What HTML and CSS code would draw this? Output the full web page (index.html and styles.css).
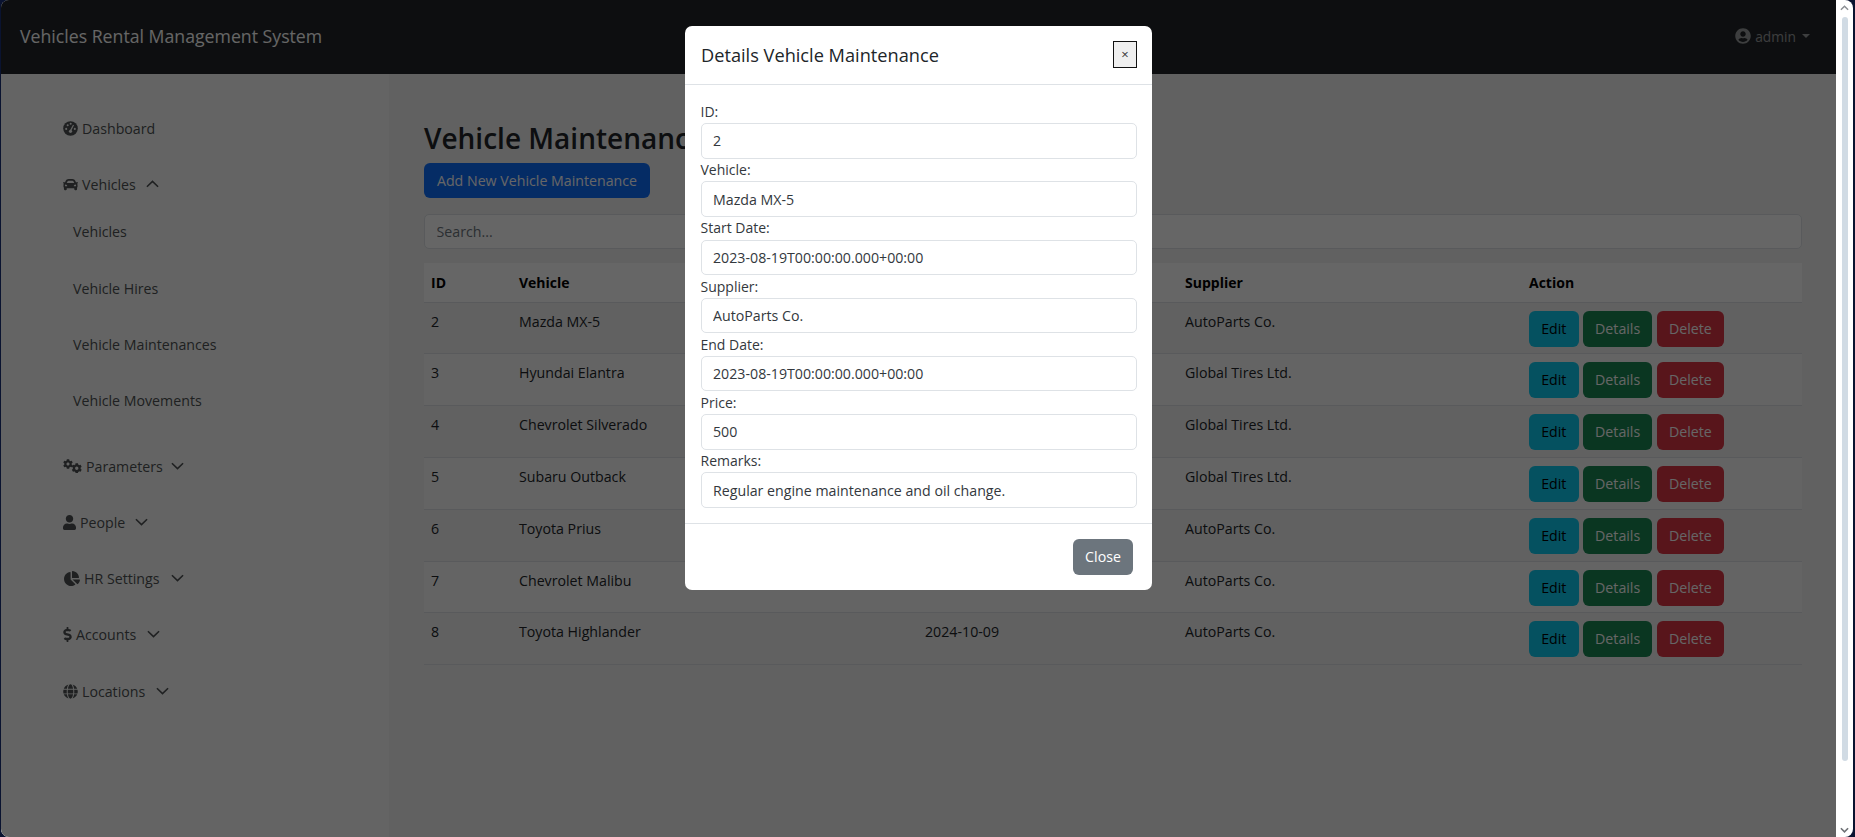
FILE: index.html
```html
<!DOCTYPE html>
<html lang="en">
<head>
<meta charset="utf-8">
<title>Vehicles Rental Management System</title>
<link rel="stylesheet" href="styles.css">
</head>
<body>
<svg class="defs" width="0" height="0" aria-hidden="true">
  <symbol id="i-chev-up" viewBox="0 0 14 8"><polyline points="1,7 7,1.2 13,7" fill="none" stroke="currentColor" stroke-width="1.7"/></symbol>
  <symbol id="i-chev-down" viewBox="0 0 14 8"><polyline points="1,1 7,6.8 13,1" fill="none" stroke="currentColor" stroke-width="1.7"/></symbol>
  <symbol id="i-cog" viewBox="0 0 512 512"><path fill="currentColor" d="M487.4 315.7l-42.6-24.6c4.3-23.2 4.3-47 0-70.2l42.6-24.6c4.9-2.8 7.1-8.6 5.5-14-11.1-35.6-30-67.8-54.7-94.6-3.8-4.1-10-5.1-14.8-2.3L380.8 110c-17.9-15.4-38.5-27.3-60.8-35.1V25.8c0-5.6-3.9-10.5-9.4-11.7-36.7-8.2-74.3-7.8-109.2 0-5.5 1.2-9.4 6.1-9.4 11.7V75c-22.2 7.9-42.8 19.8-60.8 35.1L88.7 85.5c-4.9-2.8-11-1.9-14.8 2.3-24.7 26.7-43.6 58.9-54.7 94.6-1.7 5.4.6 11.2 5.5 14L67.3 221c-4.3 23.2-4.3 47 0 70.2l-42.6 24.6c-4.9 2.8-7.1 8.6-5.5 14 11.1 35.6 30 67.8 54.7 94.6 3.8 4.1 10 5.1 14.8 2.3l42.6-24.6c17.9 15.4 38.5 27.3 60.8 35.1v49.2c0 5.6 3.9 10.5 9.4 11.7 36.7 8.2 74.3 7.8 109.2 0 5.5-1.2 9.4-6.1 9.4-11.7v-49.2c22.2-7.9 42.8-19.8 60.8-35.1l42.6 24.6c4.9 2.8 11 1.9 14.8-2.3 24.7-26.7 43.6-58.9 54.7-94.6 1.5-5.5-.7-11.3-5.6-14.1zM256 336c-44.1 0-80-35.9-80-80s35.9-80 80-80 80 35.9 80 80-35.9 80-80 80z"/></symbol>
</svg>

<div class="window">
  <div class="page">
    <header class="navbar">
      <a class="brand">Vehicles Rental Management System</a>
      <a class="user">
        <svg class="user-icon" viewBox="0 0 496 512"><path fill="currentColor" d="M248 8C111 8 0 119 0 256s111 248 248 248 248-111 248-248S385 8 248 8zm0 96c48.6 0 88 39.4 88 88s-39.4 88-88 88-88-39.4-88-88 39.4-88 88-88zm0 344c-58.7 0-111.3-26.6-146.5-68.2 18.8-35.4 55.6-59.8 98.5-59.8 2.4 0 4.8.4 7.1 1.1 13 4.2 26.6 6.9 40.9 6.9 14.3 0 28-2.7 40.9-6.9 2.3-.7 4.7-1.1 7.1-1.1 42.9 0 79.7 24.4 98.5 59.8C359.3 421.4 306.7 448 248 448z"/></svg>
        <span>admin</span>
        <i class="caret"></i>
      </a>
    </header>

    <div class="body-row">
      <nav class="sidebar">
        <a class="nav-link">
          <svg class="ico" viewBox="0 0 16 16"><circle cx="8" cy="8" r="7.8" fill="currentColor"/><g class="ico-holes"><circle cx="3.4" cy="8.4" r="1.1"/><circle cx="5" cy="4.6" r="1.1"/><circle cx="8.2" cy="3" r="1.1"/><circle cx="12.6" cy="8.4" r="1.1"/><path d="M8.2 10 L11.2 4.2"/><circle cx="8" cy="11" r="1.7"/></g></svg>
          <span>Dashboard</span>
        </a>
        <a class="nav-link">
          <svg class="ico" viewBox="0 0 512 512"><path fill="currentColor" d="M499.99 176h-59.87l-16.64-41.6C406.38 91.63 365.57 64 319.5 64h-127c-46.06 0-86.88 27.63-103.99 70.4L71.87 176H12.01C4.2 176-1.53 183.34.37 190.91l6 24C7.7 220.25 12.5 224 18.01 224h20.07C24.65 235.73 16 252.78 16 272v48c0 16.12 6.16 30.67 16 41.93V416c0 17.67 14.33 32 32 32h32c17.67 0 32-14.33 32-32v-32h256v32c0 17.67 14.33 32 32 32h32c17.67 0 32-14.33 32-32v-54.07c9.84-11.25 16-25.8 16-41.93v-48c0-19.22-8.65-36.27-22.07-48H494c5.51 0 10.31-3.75 11.64-9.09l6-24c1.89-7.57-3.84-14.91-11.65-14.91zm-352.06-17.83c7.29-18.22 24.94-30.17 44.57-30.17h127c19.63 0 37.28 11.95 44.57 30.17L384 208H128l19.93-49.83zM96 319.8c-19.2 0-32-12.76-32-31.9S76.8 256 96 256s48 28.71 48 47.85-28.8 15.95-48 15.95zm320 0c-19.2 0-48 3.19-48-15.95S396.8 256 416 256s32 12.76 32 31.9-12.8 31.9-32 31.9z"/></svg>
          <span>Vehicles</span>
          <svg class="chev"><use href="#i-chev-up"/></svg>
        </a>
        <div class="subnav">
          <a class="sub-link sub-first">Vehicles</a>
          <a class="sub-link">Vehicle Hires</a>
          <a class="sub-link">Vehicle Maintenances</a>
          <a class="sub-link">Vehicle Movements</a>
        </div>
        <a class="nav-link">
          <svg class="ico ico-gears" viewBox="0 0 19 14"><use href="#i-cog" x="0" y="0" width="10" height="10"/><use href="#i-cog" x="8.5" y="4" width="10.5" height="10.5"/></svg>
          <span>Parameters</span>
          <svg class="chev chev-tight"><use href="#i-chev-down"/></svg>
        </a>
        <a class="nav-link">
          <svg class="ico ico-user" viewBox="0 0 448 512"><path fill="currentColor" d="M224 256c70.7 0 128-57.3 128-128S294.7 0 224 0 96 57.3 96 128s57.3 128 128 128zm89.6 32h-16.7c-22.2 10.2-46.9 16-72.9 16s-50.6-5.8-72.9-16h-16.7C60.2 288 0 348.2 0 422.4V464c0 26.5 21.5 48 48 48h352c26.5 0 48-21.5 48-48v-41.6c0-74.2-60.2-134.4-134.4-134.4z"/></svg>
          <span>People</span>
          <svg class="chev"><use href="#i-chev-down"/></svg>
        </a>
        <a class="nav-link">
          <svg class="ico ico-pie" viewBox="0 0 544 512"><path fill="currentColor" d="M527.79 288H290.5l158.03 158.03c6.04 6.04 15.98 6.53 22.19.68 38.7-36.46 65.32-85.61 73.13-140.86 1.34-9.46-6.51-17.85-16.06-17.85zm-15.83-64.8C503.72 103.74 408.26 8.28 288.8.04 279.68-.59 272 7.1 272 16.24V240h223.77c9.14 0 16.82-7.68 16.19-16.8zM224 288V50.71c0-9.55-8.39-17.4-17.84-16.06C86.99 51.49-4.1 155.6.14 280.37 4.5 408.51 114.83 513.59 243.03 511.98c50.4-.63 96.97-16.87 135.26-44.03 7.9-5.6 8.42-17.23 1.57-24.08L224 288z"/></svg>
          <span>HR Settings</span>
          <svg class="chev chev-wide"><use href="#i-chev-down"/></svg>
        </a>
        <a class="nav-link">
          <svg class="ico ico-dollar" viewBox="0 0 288 512"><path fill="currentColor" d="M209.2 233.4l-108-31.6C88.7 198.2 80 186.5 80 173.5c0-16.3 13.2-29.5 29.5-29.5h66.3c12.2 0 24.2 3.7 34.2 10.5 6.1 4.1 14.3 3.1 19.5-2l34.8-34c7.1-6.9 6.1-18.4-1.8-24.5C238 74.8 207.4 64.1 176 64V16c0-8.8-7.2-16-16-16h-32c-8.8 0-16 7.2-16 16v48h-2.5C45.8 64-5.4 118.7.5 183.6c4.2 46.1 39.4 83.6 83.8 96.6l102.5 30c12.5 3.7 21.2 15.3 21.2 28.3 0 16.3-13.2 29.5-29.5 29.5h-66.3C100 368 88 364.3 78 357.5c-6.1-4.1-14.3-3.1-19.5 2l-34.8 34c-7.1 6.9-6.1 18.4 1.8 24.5 24.5 19.2 55.1 29.9 86.5 30v48c0 8.8 7.2 16 16 16h32c8.8 0 16-7.2 16-16v-48.2c46.6-.9 90.3-28.6 105.7-72.7 21.5-61.6-14.6-124.8-72.5-141.7z"/></svg>
          <span>Accounts</span>
          <svg class="chev chev-wide"><use href="#i-chev-down"/></svg>
        </a>
        <a class="nav-link">
          <svg class="ico" viewBox="0 0 496 512"><path fill="currentColor" d="M336.5 160C322 70.7 287.8 8 248 8s-74 62.7-88.5 152h177zM152 256c0 22.2 1.2 43.5 3.3 64h185.3c2.1-20.5 3.3-41.8 3.3-64s-1.2-43.5-3.3-64H155.3c-2.1 20.5-3.3 41.8-3.3 64zm324.7-96c-28.6-67.9-86.5-120.4-158-141.6 24.4 33.8 41.2 84.7 50 141.6h108zM177.2 18.4C105.8 39.6 47.8 92.1 19.3 160h108c8.7-56.9 25.5-107.8 49.9-141.6zM487.4 192H372.7c2.1 21 3.3 42.5 3.3 64s-1.2 43-3.3 64h114.6c5.5-20.5 8.6-41.8 8.6-64s-3.1-43.5-8.5-64zM120 256c0-21.5 1.2-43 3.3-64H8.6C3.2 212.5 0 233.8 0 256s3.2 43.5 8.6 64h114.6c-2-21-3.2-42.5-3.2-64zm39.5 96c14.5 89.3 48.7 152 88.5 152s74-62.7 88.5-152h-177zm159.3 141.6c71.4-21.2 129.4-73.7 158-141.6h-108c-8.8 56.9-25.6 107.8-50 141.6zM19.3 352c28.6 67.9 86.5 120.4 158 141.6-24.4-33.8-41.2-84.7-50-141.6h-108z"/></svg>
          <span>Locations</span>
          <svg class="chev chev-wide"><use href="#i-chev-down"/></svg>
        </a>
      </nav>

      <main class="content">
        <h2 class="page-title">Vehicle Maintenances</h2>
        <button class="btn btn-primary btn-add">Add New Vehicle Maintenance</button>
        <input class="search" type="text" placeholder="Search...">
        <table class="table">
          <colgroup>
            <col class="col-id"><col class="col-vehicle"><col class="col-date"><col class="col-supplier"><col class="col-action">
          </colgroup>
          <thead>
            <tr><th>ID</th><th>Vehicle</th><th>Start Date</th><th>Supplier</th><th>Action</th></tr>
          </thead>
          <tbody>
            <tr><td>2</td><td>Mazda MX-5</td><td></td><td>AutoParts Co.</td><td><div class="actions"><button class="btn btn-info">Edit</button><button class="btn btn-success">Details</button><button class="btn btn-danger">Delete</button></div></td></tr>
            <tr><td>3</td><td>Hyundai Elantra</td><td></td><td>Global Tires Ltd.</td><td><div class="actions"><button class="btn btn-info">Edit</button><button class="btn btn-success">Details</button><button class="btn btn-danger">Delete</button></div></td></tr>
            <tr><td>4</td><td>Chevrolet Silverado</td><td></td><td>Global Tires Ltd.</td><td><div class="actions"><button class="btn btn-info">Edit</button><button class="btn btn-success">Details</button><button class="btn btn-danger">Delete</button></div></td></tr>
            <tr><td>5</td><td>Subaru Outback</td><td></td><td>Global Tires Ltd.</td><td><div class="actions"><button class="btn btn-info">Edit</button><button class="btn btn-success">Details</button><button class="btn btn-danger">Delete</button></div></td></tr>
            <tr><td>6</td><td>Toyota Prius</td><td></td><td>AutoParts Co.</td><td><div class="actions"><button class="btn btn-info">Edit</button><button class="btn btn-success">Details</button><button class="btn btn-danger">Delete</button></div></td></tr>
            <tr><td>7</td><td>Chevrolet Malibu</td><td></td><td>AutoParts Co.</td><td><div class="actions"><button class="btn btn-info">Edit</button><button class="btn btn-success">Details</button><button class="btn btn-danger">Delete</button></div></td></tr>
            <tr><td>8</td><td>Toyota Highlander</td><td>2024-10-09</td><td>AutoParts Co.</td><td><div class="actions"><button class="btn btn-info">Edit</button><button class="btn btn-success">Details</button><button class="btn btn-danger">Delete</button></div></td></tr>
          </tbody>
        </table>
      </main>
    </div>

    <div class="backdrop"></div>
    <div class="modal-layer">
      <section class="modal">
        <div class="modal-header">
          <h5 class="modal-title">Details Vehicle Maintenance</h5>
          <button class="btn-close">×</button>
        </div>
        <div class="modal-body">
          <div class="field"><label class="field-label">ID:</label><input class="field-input" type="text" value="2"></div>
          <div class="field"><label class="field-label">Vehicle:</label><input class="field-input" type="text" value="Mazda MX-5"></div>
          <div class="field"><label class="field-label">Start Date:</label><input class="field-input" type="text" value="2023-08-19T00:00:00.000+00:00"></div>
          <div class="field"><label class="field-label">Supplier:</label><input class="field-input" type="text" value="AutoParts Co."></div>
          <div class="field"><label class="field-label">End Date:</label><input class="field-input" type="text" value="2023-08-19T00:00:00.000+00:00"></div>
          <div class="field"><label class="field-label">Price:</label><input class="field-input" type="text" value="500"></div>
          <div class="field"><label class="field-label">Remarks:</label><input class="field-input" type="text" value="Regular engine maintenance and oil change."></div>
        </div>
        <div class="modal-footer">
          <button class="btn btn-secondary">Close</button>
        </div>
      </section>
    </div>
  </div>

  <div class="scrollbar">
    <svg class="sb-arrow" viewBox="0 0 10 6"><polyline points="1,5 5,1 9,5" fill="none" stroke="#8b8f94" stroke-width="1.6"/></svg>
    <div class="sb-thumb"></div>
    <svg class="sb-arrow" viewBox="0 0 10 6"><polyline points="1,1 5,5 9,1" fill="none" stroke="#6f7276" stroke-width="1.8"/></svg>
  </div>
</div>
</body>
</html>
```

FILE: styles.css
```css
* { box-sizing: border-box; }

html, body {
  margin: 0;
  height: 100%;
  overflow: hidden;
  background: #0a1330;
}

body {
  font-family: "Open Sans", "Noto Sans", sans-serif;
  font-size: 14.2px;
  line-height: 21px;
  color: #212529;
}

.defs { position: absolute; }

.window {
  display: flex;
  height: 837px;
  margin: 0 2px 0 1px;
  border-radius: 8px;
  overflow: hidden;
}

.page {
  position: relative;
  flex: 1;
  display: flex;
  flex-direction: column;
  min-width: 0;
  background: #f2f2f2;
}

/* navbar */
.navbar {
  height: 74px;
  flex: none;
  display: flex;
  align-items: center;
  justify-content: space-between;
  padding: 0 26px 2px 19px;
  background: #212529;
}

.brand {
  font-size: 17.7px;
  color: #fff;
}

.user {
  display: flex;
  align-items: center;
  gap: 4px;
  font-size: 13.8px;
  color: rgba(255, 255, 255, .55);
}

.user-icon { width: 16px; height: 16px; }

.caret {
  margin-left: 2px;
  border-top: 4px solid currentColor;
  border-left: 4px solid transparent;
  border-right: 4px solid transparent;
}

/* sidebar */
.body-row {
  flex: 1;
  display: flex;
  min-height: 0;
}

.sidebar {
  width: 388px;
  flex: none;
  padding: 26px 0 0 62px;
  background: #f9fbf9;
  color: #4e5154;
}

.nav-link {
  display: flex;
  align-items: center;
  height: 56px;
  gap: 4px;
}

.nav-link:last-child { margin-top: 1px; }

.ico { width: 15px; height: 15px; flex: none; }
.ico-holes { fill: #f9fbf9; }
.ico-holes path { fill: none; stroke: #f9fbf9; stroke-width: 1.3; }
.ico-gears { width: 19px; height: 14px; }
.ico-user { width: 13px; height: 15px; }
.ico-pie { width: 16px; height: 15px; margin-left: 1px; }
.ico-dollar { width: 9px; height: 15px; }

.chev { width: 13px; height: 8px; margin-left: 6px; flex: none; }
.chev-wide { margin-left: 7px; }
.chev-tight { margin-left: 4px; }

.subnav {
  display: flex;
  flex-direction: column;
  margin: -8px 0 10px;
  padding-left: 10px;
}

.sub-link {
  display: flex;
  align-items: center;
  height: 56px;
}

.sub-first { padding-bottom: 2px; }

/* main */
.content {
  flex: 1;
  min-width: 0;
  padding: 47px 34px 0 35px;
}

.page-title {
  margin: 0 0 8px;
  font-size: 28px;
  line-height: 34px;
  font-weight: 600;
  color: #212529;
}

.btn {
  display: inline-block;
  height: 36px;
  padding: 0 11.2px;
  border: 1px solid transparent;
  border-radius: 6px;
  font: inherit;
  color: #fff;
}

.btn-primary { background: #0d6efd; }
.btn-info { background: #0dcaf0; color: #000; }
.btn-success { background: #198754; }
.btn-danger { background: #dc3545; }
.btn-secondary { background: #6c757d; }

.btn-add { display: block; height: 35px; min-width: 226px; }

.search {
  display: block;
  width: 100%;
  height: 35px;
  margin: 16px 0 14px;
  padding: 0 11.5px;
  border: 1px solid #dee2e6;
  border-radius: 5px;
  background: #fff;
  font: inherit;
  color: #212529;
}

.search::placeholder { color: #6c757d; }

/* table */
.table {
  width: 100%;
  table-layout: fixed;
  border-collapse: collapse;
}

.col-id { width: 88px; }
.col-vehicle { width: 406px; }
.col-date { width: 260px; }
.col-supplier { width: 344px; }
.col-action { width: 280px; }

.table th {
  height: 39px;
  padding: 0 7px;
  text-align: left;
  font-size: 14px;
  font-weight: 700;
  color: #000;
  background: #fff;
  border-bottom: 1px solid #dee2e6;
}

.table td {
  height: 52px;
  padding: 8px 7px 0;
  vertical-align: top;
  color: #212529;
  border-bottom: 1px solid #dee2e6;
}

.table tbody tr:nth-child(5n+1) td { height: 51px; }

.table tbody tr:nth-child(even) td { background: #fbfbfb; }

.actions {
  display: flex;
  gap: 4.3px;
}

/* modal */
.backdrop {
  position: absolute;
  inset: 0;
  background: rgba(0, 0, 0, .6);
}

.modal-layer {
  position: absolute;
  inset: 26px 0 auto 0;
  display: flex;
  justify-content: center;
}

.modal {
  width: 467px;
  background: #fff;
  border-radius: 7px;
  display: flex;
  flex-direction: column;
}

.modal-header {
  height: 59px;
  flex: none;
  display: flex;
  align-items: center;
  justify-content: space-between;
  padding: 0 15px 1px 16px;
  border-bottom: 1px solid #dee2e6;
}

.modal-title {
  margin: 0;
  font-size: 18.2px;
  line-height: 24px;
  font-weight: 500;
  color: #212529;
}

.btn-close {
  width: 24px;
  height: 27px;
  padding: 0;
  background: #efefef;
  border: 1px solid #111;
  font: 13px/1 "Open Sans", sans-serif;
  color: #333;
}

.modal-body {
  padding: 15px 15px 17px 15.5px;
}

.field { height: 58.2px; }
.field:last-child { height: 57px; }

.field-label {
  display: block;
  height: 23.2px;
  padding-top: 1px;
  font-size: 14px;
  line-height: 21px;
  color: #33383d;
}

.field-input {
  display: block;
  width: 100%;
  height: 35.5px;
  padding: 0 11.5px;
  border: 1px solid #dee2e6;
  border-radius: 5px;
  background: #fff;
  font: inherit;
  color: #33383d;
}

.modal-footer {
  height: 67px;
  display: flex;
  justify-content: flex-end;
  padding: 14.5px 19px 0 0;
  border-top: 1px solid #dee2e6;
}

.modal-footer .btn { height: 36px; width: 60px; padding: 0; }

/* scrollbar */
.scrollbar {
  width: 17px;
  flex: none;
  background: #fff;
  display: flex;
  flex-direction: column;
  align-items: center;
  padding: 5px 0 4px;
}

.sb-arrow { width: 9px; height: 6px; flex: none; }

.sb-thumb {
  width: 6px;
  height: 744px;
  margin: 6px 0 auto;
  background: #d1dbe4;
  border-radius: 3px;
}
```
